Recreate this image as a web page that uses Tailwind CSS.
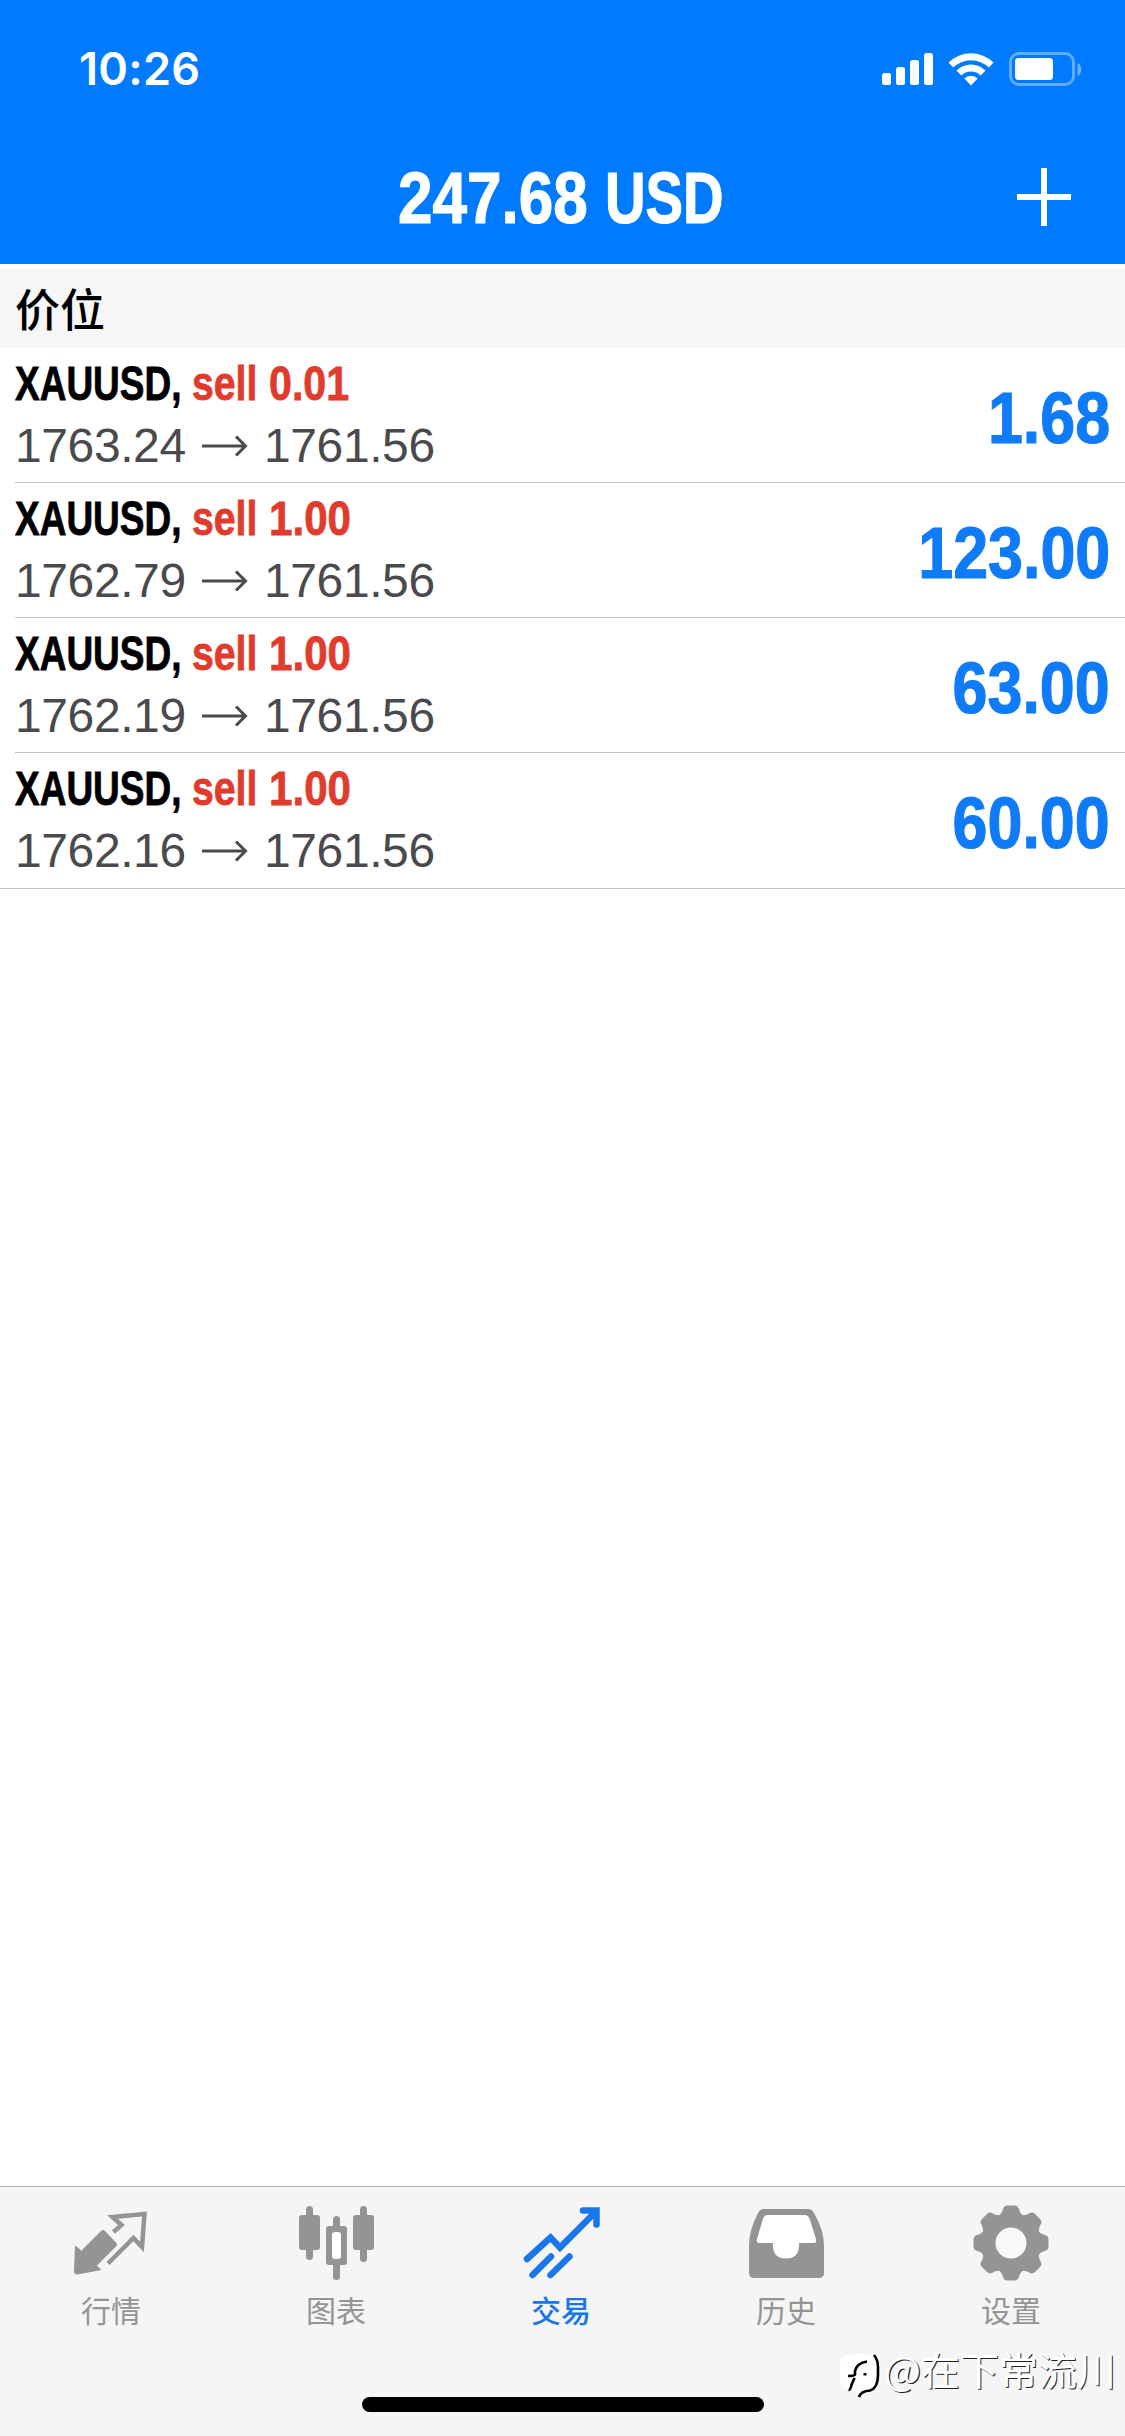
<!DOCTYPE html>
<html lang="zh-CN">
<head>
<meta charset="utf-8">
<title>交易</title>
<script src="https://cdn.jsdelivr.net/npm/@tailwindcss/browser@4"></script>
</head>
<body class="bg-white">
<div class="flex flex-col w-[1125px] h-[2436px] overflow-hidden bg-white font-['Liberation_Sans','Noto_Sans_CJK_SC',sans-serif]">
  <header class="h-[264px] bg-[#007aff] text-white flex flex-col">
    <div class="h-[132px] flex items-center justify-between pl-[79px] pr-[43px] pt-[6px]">
      <div class="font-['Inter',sans-serif] font-semibold text-[45px] leading-[60px] tracking-[0.3px]">10:26</div>
      <svg class="w-[202px] h-[38px]" viewBox="880 50 202 38" fill="#fff">
        <rect x="882" y="73" width="9" height="12" rx="2.5"/><rect x="896" y="67" width="9" height="18" rx="2.5"/><rect x="910" y="60" width="9" height="25" rx="2.5"/><rect x="924" y="53" width="9" height="32" rx="2.5"/>
        <path d="M948.500 62.500a32 32 0 0 1 45 0l-4.700 5a25.500 25.500 0 0 0-35.600 0z"/><path d="M956.500 70.500a20.500 20.500 0 0 1 29 0l-4.800 5a13.600 13.600 0 0 0-19.400 0z"/><path d="M964.300 78.500a9.500 9.500 0 0 1 13.400 0l-6.700 7z"/>
        <rect x="1010.500" y="53.500" width="63" height="31" rx="8.500" fill="none" stroke="#fff" stroke-opacity=".38" stroke-width="3"/><rect x="1015" y="58" width="38" height="22" rx="3.500"/><path d="M1077.500 63c5 1.500 5 11.500 0 13z" fill-opacity=".42"/>
      </svg>
    </div>
    <div class="h-[132px] flex items-center justify-between pl-[398px] pr-[54px] pb-[2px]">
      <div class="flex items-baseline font-bold text-[73px] leading-[134px] pt-[2px] [-webkit-text-stroke:1.2px_currentColor]"><span class="w-[207px]"><span class="inline-block origin-left scale-x-[0.85]">247.68</span></span><span class="w-[119px]"><span class="inline-block origin-left scale-x-[0.77]">USD</span></span></div>
      <svg class="w-[54px] h-[58px] shrink-0" viewBox="0 0 54 58" fill="#fff"><path d="M24 0h6v26h24v6H30v26h-6V32H0v-6h24z"/></svg>
    </div>
  </header>
  <div class="h-[84px] border-t-[5px] border-white bg-[#f6f6f6] pl-[15px] flex items-center text-black font-medium text-[45px] leading-[66px] pt-[6px]">价位</div>
  <main class="flex-1">
    <div class="border-b border-[#c0c0c4]">
      <div class="ml-[15px] h-[135px] border-b border-[#c0c0c4] flex justify-between pr-[15px]">
        <div class="pt-[5px]"><div class="flex items-baseline font-bold text-[49px] leading-[60px] [-webkit-text-stroke:0.8px_currentColor]"><span class="w-[177px]"><span class="inline-block origin-left scale-x-[0.755]">XAUUSD,</span></span><span class="w-[77px] text-[#e03c2e]"><span class="inline-block origin-left scale-x-[0.8]">sell</span></span><span class="w-[90px] text-[#e03c2e]"><span class="inline-block origin-left scale-x-[0.84]">0.01</span></span></div><div class="flex items-center text-[48px] leading-[66px] text-[#4a4a4c] tracking-[-0.4px]"><span class="w-[187px]">1763.24</span><svg class="w-[46px] h-[22px] mr-[16px]" viewBox="0 0 46 22" fill="none" stroke="#4a4a4c" stroke-width="3"><path d="M0 11h44M34 1.500l9.500 9.500L34 20.500"/></svg><span>1761.56</span></div></div>
        <div class="font-bold text-[73px] leading-[139px] text-[#0f7bf8] [-webkit-text-stroke:1.2px_currentColor]"><span class="inline-block origin-right scale-x-[0.86]">1.68</span></div>
      </div>
      <div class="ml-[15px] h-[135px] border-b border-[#c0c0c4] flex justify-between pr-[15px]">
        <div class="pt-[5px]"><div class="flex items-baseline font-bold text-[49px] leading-[60px] [-webkit-text-stroke:0.8px_currentColor]"><span class="w-[177px]"><span class="inline-block origin-left scale-x-[0.755]">XAUUSD,</span></span><span class="w-[77px] text-[#e03c2e]"><span class="inline-block origin-left scale-x-[0.8]">sell</span></span><span class="w-[90px] text-[#e03c2e]"><span class="inline-block origin-left scale-x-[0.86]">1.00</span></span></div><div class="flex items-center text-[48px] leading-[66px] text-[#4a4a4c] tracking-[-0.4px]"><span class="w-[187px]">1762.79</span><svg class="w-[46px] h-[22px] mr-[16px]" viewBox="0 0 46 22" fill="none" stroke="#4a4a4c" stroke-width="3"><path d="M0 11h44M34 1.500l9.500 9.500L34 20.500"/></svg><span>1761.56</span></div></div>
        <div class="font-bold text-[73px] leading-[139px] text-[#0f7bf8] [-webkit-text-stroke:1.2px_currentColor]"><span class="inline-block origin-right scale-x-[0.86]">123.00</span></div>
      </div>
      <div class="ml-[15px] h-[135px] border-b border-[#c0c0c4] flex justify-between pr-[15px]">
        <div class="pt-[5px]"><div class="flex items-baseline font-bold text-[49px] leading-[60px] [-webkit-text-stroke:0.8px_currentColor]"><span class="w-[177px]"><span class="inline-block origin-left scale-x-[0.755]">XAUUSD,</span></span><span class="w-[77px] text-[#e03c2e]"><span class="inline-block origin-left scale-x-[0.8]">sell</span></span><span class="w-[90px] text-[#e03c2e]"><span class="inline-block origin-left scale-x-[0.86]">1.00</span></span></div><div class="flex items-center text-[48px] leading-[66px] text-[#4a4a4c] tracking-[-0.4px]"><span class="w-[187px]">1762.19</span><svg class="w-[46px] h-[22px] mr-[16px]" viewBox="0 0 46 22" fill="none" stroke="#4a4a4c" stroke-width="3"><path d="M0 11h44M34 1.500l9.500 9.500L34 20.500"/></svg><span>1761.56</span></div></div>
        <div class="font-bold text-[73px] leading-[139px] text-[#0f7bf8] [-webkit-text-stroke:1.2px_currentColor]"><span class="inline-block origin-right scale-x-[0.86]">63.00</span></div>
      </div>
      <div class="ml-[15px] h-[135px] flex justify-between pr-[15px]">
        <div class="pt-[5px]"><div class="flex items-baseline font-bold text-[49px] leading-[60px] [-webkit-text-stroke:0.8px_currentColor]"><span class="w-[177px]"><span class="inline-block origin-left scale-x-[0.755]">XAUUSD,</span></span><span class="w-[77px] text-[#e03c2e]"><span class="inline-block origin-left scale-x-[0.8]">sell</span></span><span class="w-[90px] text-[#e03c2e]"><span class="inline-block origin-left scale-x-[0.86]">1.00</span></span></div><div class="flex items-center text-[48px] leading-[66px] text-[#4a4a4c] tracking-[-0.4px]"><span class="w-[187px]">1762.16</span><svg class="w-[46px] h-[22px] mr-[16px]" viewBox="0 0 46 22" fill="none" stroke="#4a4a4c" stroke-width="3"><path d="M0 11h44M34 1.500l9.500 9.500L34 20.500"/></svg><span>1761.56</span></div></div>
        <div class="font-bold text-[73px] leading-[139px] text-[#0f7bf8] [-webkit-text-stroke:1.2px_currentColor]"><span class="inline-block origin-right scale-x-[0.86]">60.00</span></div>
      </div>
    </div>
  </main>
  <footer class="relative h-[250px] border-t border-[#acacac] bg-[#f5f5f5]">
    <nav class="grid grid-cols-5 w-[1125px] -ml-[1.5px] text-[30px] leading-[40px] text-[#949494] pt-[16px]">
      <div class="flex flex-col items-center gap-[9px]">
        <svg class="w-[80px] h-[80px]" viewBox="72 2203 80 80" fill="#949494"><path d="M76 2245.500q6 4 6 5.500l20-20q2-2 4 0l11 11.500q2 2 0 4l-19 19 4.500 4.500-24 4.500q-3.500 0-3.500-3.500z"/><path d="M114.500 2232l8-7-9-8 32-3-2.500 33-8.500-9-25.500 25.500" fill="none" stroke="#949494" stroke-width="4.500"/></svg>
        <span>行情</span></div>
      <div class="flex flex-col items-center gap-[9px]">
        <svg class="w-[80px] h-[80px]" viewBox="296 2203 80 80" fill="#949494"><rect x="299" y="2215" width="21" height="35" rx="3"/><rect x="306" y="2206" width="7" height="54" rx="3.500"/><rect x="353" y="2215" width="21" height="35" rx="3"/><rect x="360" y="2206" width="7" height="56" rx="3.500"/><rect x="333" y="2216" width="7" height="64" rx="3.500"/><rect x="326" y="2226" width="21" height="39" rx="3"/><rect x="332" y="2232" width="9" height="27" rx="3" fill="#fff"/></svg>
        <span>图表</span></div>
      <div class="flex flex-col items-center gap-[9px] text-[#1a76ea]">
        <svg class="w-[80px] h-[80px]" viewBox="521 2203 80 80" fill="none" stroke="#1a76ea" stroke-width="6.500" stroke-linecap="round"><path d="M527 2259l23.500-21.500 9.500 10 36-36M583 2210.500h13.500v14M532.500 2275l18.500-18.500M550.500 2275l19-18.500"/></svg>
        <span class="font-medium">交易</span></div>
      <div class="flex flex-col items-center gap-[9px]">
        <svg class="w-[80px] h-[80px]" viewBox="746 2203 80 80"><path d="M764 2209h44q4 0 6 4 10 17 10 33v27q0 5-5 5h-65q-5 0-5-5v-27q0-16 9-33 2-4 6-4z" fill="#949494"/><path d="M767 2215h38q3 0 4.500 3.500l6.500 20.500q1 4-2 4h-15q1 15.500-13 15.500T773 2243h-14q-3 0-2-4l6-20.500q1.500-3.500 4-3.500z" fill="#fff"/></svg>
        <span>历史</span></div>
      <div class="flex flex-col items-center gap-[9px]">
        <svg class="w-[80px] h-[80px]" viewBox="-40 -40 80 80"><g fill="#949494"><circle r="30"/><g id="t"><path id="g" d="M-13-27q4-2 5-7 1-3.500 4.500-3.500h7Q7-37.500 8-34q1 5 5 7v54q-4 2-5 7-1 3.500-4.500 3.500h-7Q-7 37.500-8 34q-1-5-5-7z"/><use href="#g" transform="rotate(90)"/></g><use href="#t" transform="rotate(45)"/></g><circle r="15.500" fill="#f8f8f8"/></svg>
        <span>设置</span></div>
    </nav>
    <div class="absolute left-[362px] top-[210px] w-[402px] h-[15px] rounded-full bg-black"></div>
    <div class="absolute left-[838px] top-[153px] flex items-center text-[39px] leading-[56px] text-white font-['Noto_Sans_CJK_SC',sans-serif]">
      <svg class="w-[46px] h-[56px] overflow-visible" viewBox="0 0 46 56"><path d="M14 14h13q13 0 13 13v12q0 11-10 12l-8 5-3-5q-17-1-17-13V27q0-13 12-13z" fill="#fff"/><path d="M10.500 50q2 0 3-5l3-7M10 36q6 0 7-1.500V31q2-8 12-9.500M25.500 34.300h3M36 15q4 5 4 12v8q0 13-8 15.500-9 .5-11 6.500" fill="none" stroke="#000" stroke-width="2.600"/></svg>
      <span class="[text-shadow:1.200px_1.200px_0_#222]">@在下常流川</span>
    </div>
  </footer>
</div>
</body>
</html>
